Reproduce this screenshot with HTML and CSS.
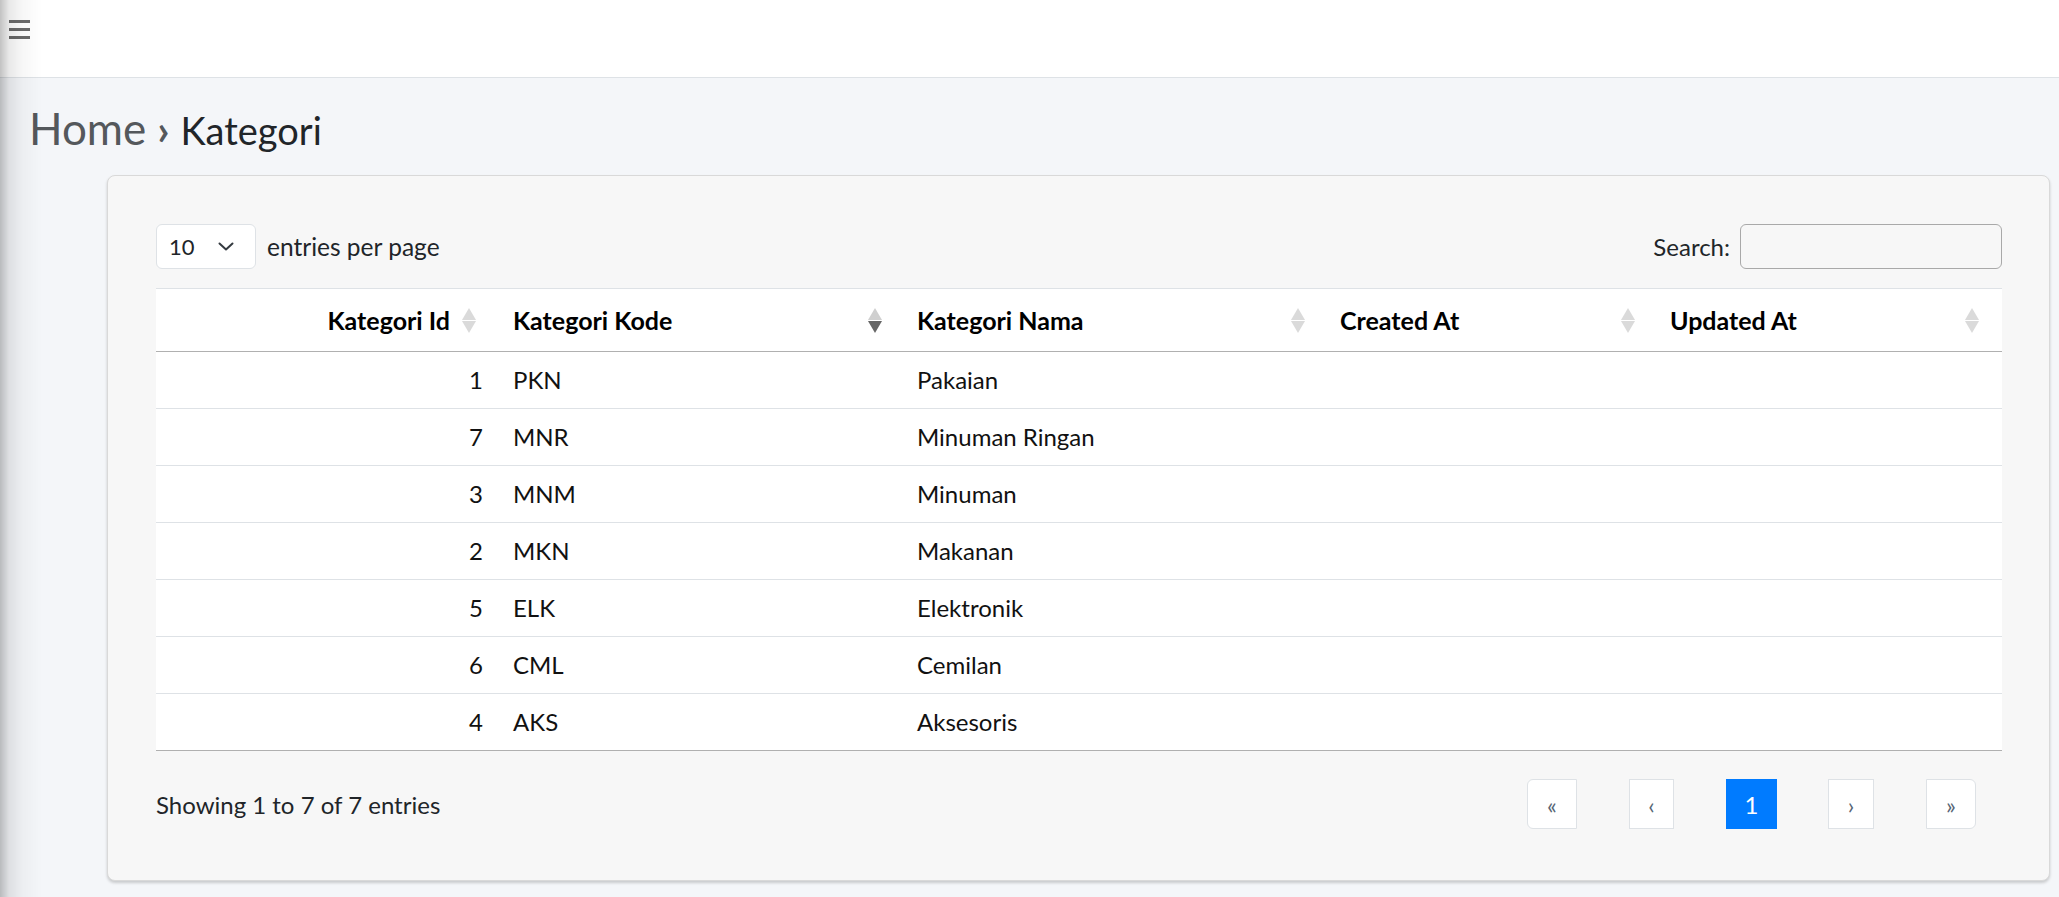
FILE: index.html
```html
<!DOCTYPE html>
<html lang="id">
<head>
<meta charset="utf-8">
<title>Kategori</title>
<link rel="stylesheet" href="styles.css">
</head>
<body>
<div class="edge-shade"></div>
<nav class="topbar">
  <div class="burger"><span></span><span></span><span></span></div>
</nav>
<main class="content">
  <h1 class="crumb"><span class="crumb-home">Home</span><span class="crumb-sep">›</span><span class="crumb-cur">Kategori</span></h1>
  <section class="card">
    <div class="dt-top">
      <div class="dt-length">
        <div class="len-select"><span>10</span><svg class="chev" viewBox="0 0 16 9" width="16" height="9"><path d="M1.5 1.5 L8 7.5 L14.5 1.5" fill="none" stroke="#343a40" stroke-width="2" stroke-linecap="round" stroke-linejoin="round"/></svg></div>
        <span class="len-label">entries per page</span>
      </div>
      <label class="dt-search">Search:<input type="text" class="search-input"></label>
    </div>
    <table class="dt-table">
      <colgroup>
        <col class="c1"><col class="c2"><col class="c3"><col class="c4"><col class="c5">
      </colgroup>
      <thead>
        <tr>
          <th class="num"><div class="th-in th-end"><span>Kategori Id</span><span class="sort"><i class="up"></i><i class="down"></i></span></div></th>
          <th><div class="th-in"><span>Kategori Kode</span><span class="sort desc"><i class="up"></i><i class="down"></i></span></div></th>
          <th><div class="th-in"><span>Kategori Nama</span><span class="sort"><i class="up"></i><i class="down"></i></span></div></th>
          <th><div class="th-in"><span>Created At</span><span class="sort"><i class="up"></i><i class="down"></i></span></div></th>
          <th><div class="th-in"><span>Updated At</span><span class="sort"><i class="up"></i><i class="down"></i></span></div></th>
        </tr>
      </thead>
      <tbody>
        <tr><td class="num">1</td><td>PKN</td><td>Pakaian</td><td></td><td></td></tr>
        <tr><td class="num">7</td><td>MNR</td><td>Minuman Ringan</td><td></td><td></td></tr>
        <tr><td class="num">3</td><td>MNM</td><td>Minuman</td><td></td><td></td></tr>
        <tr><td class="num">2</td><td>MKN</td><td>Makanan</td><td></td><td></td></tr>
        <tr><td class="num">5</td><td>ELK</td><td>Elektronik</td><td></td><td></td></tr>
        <tr><td class="num">6</td><td>CML</td><td>Cemilan</td><td></td><td></td></tr>
        <tr><td class="num">4</td><td>AKS</td><td>Aksesoris</td><td></td><td></td></tr>
      </tbody>
    </table>
    <div class="dt-bottom">
      <div class="dt-info">Showing 1 to 7 of 7 entries</div>
      <ul class="pager">
        <li class="pg pg-first">«</li>
        <li class="pg pg-prev">‹</li>
        <li class="pg pg-active">1</li>
        <li class="pg pg-next">›</li>
        <li class="pg pg-last">»</li>
      </ul>
    </div>
  </section>
</main>
</body>
</html>
```
FILE: styles.css
```css
* { box-sizing: border-box; }
html, body { margin: 0; padding: 0; }
body {
  background: #f4f6f9;
  font-family: "Lato", "Open Sans", sans-serif;
  font-size: 24px;
  color: #212529;
  width: 2059px;
  min-height: 897px;
  overflow: hidden;
}
.edge-shade {
  position: fixed;
  left: 0; top: 0; bottom: 0;
  width: 42px;
  background: linear-gradient(to right, rgba(0,0,0,0.24) 0, rgba(0,0,0,0.09) 9px, rgba(0,0,0,0.03) 22px, rgba(0,0,0,0) 42px);
  pointer-events: none;
  z-index: 10;
}
.topbar {
  height: 78px;
  background: #fff;
  border-bottom: 1px solid #dee2e6;
  padding: 20px 0 0 9px;
}
.burger { width: 21px; display: flex; flex-direction: column; gap: 5px; }
.burger span { display: block; height: 3px; background: #6a6a6a; }

.content { padding: 0; }
.crumb {
  margin: 24px 0 21px 29px;
  height: 52px;
  display: flex;
  align-items: baseline;
  line-height: 52px;
  font-weight: 400;
}
.crumb-home { font-size: 44px; color: #54585c; }
.crumb-sep { font-size: 42px; color: #54585c; margin: 0 11px 0 11px; font-weight: 700; }
.crumb-cur { font-size: 38px; color: #212529; }

.card {
  margin-left: 107px;
  width: 1943px;
  background: #f7f7f7;
  border: 1px solid #d9d9d9;
  border-radius: 8px;
  box-shadow: 0 2px 3px rgba(0,0,0,0.18);
  padding: 48px 47px 51px 48px;
}
.dt-top {
  display: flex;
  justify-content: space-between;
  align-items: center;
  height: 45px;
}
.dt-length { display: flex; align-items: center; gap: 11px; }
.len-select {
  width: 100px; height: 45px;
  background: #fff;
  border: 1px solid #dee2e6;
  border-radius: 6px;
  display: flex; align-items: center;
  padding-left: 12px;
  font-size: 22px;
}
.len-select .chev { margin-left: auto; margin-right: 21px; }
.len-label { color: #212529; font-size: 24.5px; }
.dt-search { display: flex; align-items: center; gap: 10px; }
.search-input {
  width: 262px; height: 45px;
  border: 1px solid #a9a9a9;
  border-radius: 6px;
  background: transparent;
  outline: none;
}

.dt-table {
  margin-top: 19px;
  width: 1846px;
  table-layout: fixed;
  border-collapse: separate;
  border-spacing: 0;
  background: #fff;
}
col.c1 { width: 345px; }
col.c2 { width: 404px; }
col.c3 { width: 423px; }
col.c4 { width: 330px; }
col.c5 { width: 344px; }
.dt-table th {
  border-top: 1px solid #dee2e6;
  border-bottom: 1px solid #b0b0b0;
  padding: 16px 23px 16px 12px;
  line-height: 30px;
  font-size: 25px;
  font-weight: 700;
  color: #000;
  text-align: left;
}
.dt-table th.num { padding-right: 25px; }
.th-in { display: flex; align-items: center; justify-content: space-between; }
.th-in.th-end { justify-content: flex-end; gap: 12px; }
.sort { display: flex; flex-direction: column; gap: 1px; width: 14px; }
.sort i { display: block; width: 0; height: 0; border-left: 7px solid transparent; border-right: 7px solid transparent; }
.sort .up { border-bottom: 12px solid #dadada; }
.sort .down { border-top: 12px solid #dadada; }
.sort.desc .up { border-bottom-color: #cfcfcf; }
.sort.desc .down { border-top-color: #666; }

.dt-table td {
  padding: 13px 12px;
  line-height: 30px;
  border-bottom: 1px solid #dee2e6;
  color: #111;
}
.dt-table td.num { text-align: right; padding-right: 18px; }
.dt-table tbody tr:last-child td { border-bottom-color: #b0b0b0; }

.dt-bottom {
  margin-top: 28px;
  display: flex;
  justify-content: space-between;
  align-items: center;
  height: 50px;
}
.pager {
  list-style: none;
  margin: 0 26px 0 0;
  padding: 0;
  display: flex;
  gap: 52px;
}
.pg {
  height: 50px;
  display: flex; align-items: center; justify-content: center;
  background: #fff;
  border: 1px solid #dee2e6;
  color: #566574;
  font-size: 23px;
  padding-top: 2px;
}
.pg-first { width: 50px; border-radius: 6px 0 0 6px; }
.pg-prev { width: 45px; }
.pg-active { width: 51px; background: #007bff; border-color: #007bff; color: #fff; font-size: 24px; margin-right: -1px; padding-top: 0; }
.pg-next { width: 46px; }
.pg-last { width: 50px; border-radius: 0 6px 6px 0; }
```
